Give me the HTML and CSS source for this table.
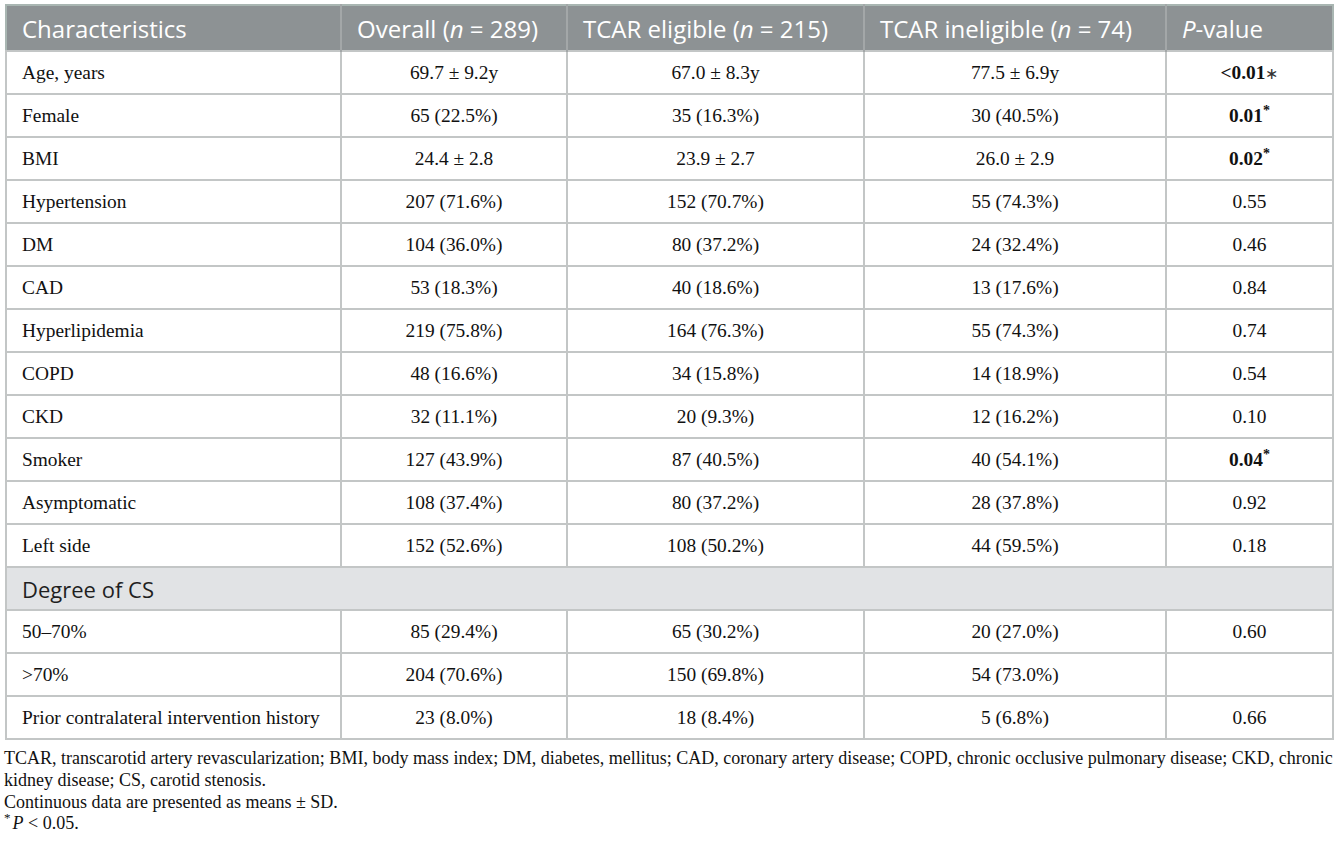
FILE: index.html
```html
<!DOCTYPE html>
<html lang="en">
<head>
    <meta charset="UTF-8">
    <title>Table 1 - TCAR eligibility</title>
    <link rel="stylesheet" href="styles.css">
</head>
<body>
    <div class="wrap">
        <table class="data-table">
            <colgroup>
                <col class="c-label">
                <col class="c-overall">
                <col class="c-elig">
                <col class="c-inelig">
                <col class="c-p">
            </colgroup>
            <thead>
                <tr>
                    <th>Characteristics</th>
                    <th>Overall (<i>n</i> = 289)</th>
                    <th>TCAR eligible (<i>n</i> = 215)</th>
                    <th>TCAR ineligible (<i>n</i> = 74)</th>
                    <th><i>P</i>-value</th>
                </tr>
            </thead>
            <tbody>
                <tr>
                    <td>Age, years</td>
                    <td>69.7 ± 9.2y</td>
                    <td>67.0 ± 8.3y</td>
                    <td>77.5 ± 6.9y</td>
                    <td><b>&lt;0.01</b><span class="ast">∗</span></td>
                </tr>
                <tr>
                    <td>Female</td>
                    <td>65 (22.5%)</td>
                    <td>35 (16.3%)</td>
                    <td>30 (40.5%)</td>
                    <td><b>0.01<sup>*</sup></b></td>
                </tr>
                <tr>
                    <td>BMI</td>
                    <td>24.4 ± 2.8</td>
                    <td>23.9 ± 2.7</td>
                    <td>26.0 ± 2.9</td>
                    <td><b>0.02<sup>*</sup></b></td>
                </tr>
                <tr>
                    <td>Hypertension</td>
                    <td>207 (71.6%)</td>
                    <td>152 (70.7%)</td>
                    <td>55 (74.3%)</td>
                    <td>0.55</td>
                </tr>
                <tr>
                    <td>DM</td>
                    <td>104 (36.0%)</td>
                    <td>80 (37.2%)</td>
                    <td>24 (32.4%)</td>
                    <td>0.46</td>
                </tr>
                <tr>
                    <td>CAD</td>
                    <td>53 (18.3%)</td>
                    <td>40 (18.6%)</td>
                    <td>13 (17.6%)</td>
                    <td>0.84</td>
                </tr>
                <tr>
                    <td>Hyperlipidemia</td>
                    <td>219 (75.8%)</td>
                    <td>164 (76.3%)</td>
                    <td>55 (74.3%)</td>
                    <td>0.74</td>
                </tr>
                <tr>
                    <td>COPD</td>
                    <td>48 (16.6%)</td>
                    <td>34 (15.8%)</td>
                    <td>14 (18.9%)</td>
                    <td>0.54</td>
                </tr>
                <tr>
                    <td>CKD</td>
                    <td>32 (11.1%)</td>
                    <td>20 (9.3%)</td>
                    <td>12 (16.2%)</td>
                    <td>0.10</td>
                </tr>
                <tr>
                    <td>Smoker</td>
                    <td>127 (43.9%)</td>
                    <td>87 (40.5%)</td>
                    <td>40 (54.1%)</td>
                    <td><b>0.04<sup>*</sup></b></td>
                </tr>
                <tr>
                    <td>Asymptomatic</td>
                    <td>108 (37.4%)</td>
                    <td>80 (37.2%)</td>
                    <td>28 (37.8%)</td>
                    <td>0.92</td>
                </tr>
                <tr>
                    <td>Left side</td>
                    <td>152 (52.6%)</td>
                    <td>108 (50.2%)</td>
                    <td>44 (59.5%)</td>
                    <td>0.18</td>
                </tr>
                <tr class="group-row">
                    <td colspan="5">Degree of CS</td>
                </tr>
                <tr>
                    <td>50–70%</td>
                    <td>85 (29.4%)</td>
                    <td>65 (30.2%)</td>
                    <td>20 (27.0%)</td>
                    <td>0.60</td>
                </tr>
                <tr>
                    <td>&gt;70%</td>
                    <td>204 (70.6%)</td>
                    <td>150 (69.8%)</td>
                    <td>54 (73.0%)</td>
                    <td></td>
                </tr>
                <tr>
                    <td>Prior contralateral intervention history</td>
                    <td>23 (8.0%)</td>
                    <td>18 (8.4%)</td>
                    <td>5 (6.8%)</td>
                    <td>0.66</td>
                </tr>
            </tbody>
        </table>

        <div class="notes">
            <p>TCAR, transcarotid artery revascularization; BMI, body mass index; DM, diabetes, mellitus; CAD, coronary artery disease; COPD, chronic occlusive pulmonary disease; CKD, chronic kidney disease; CS, carotid stenosis.</p>
            <p>Continuous data are presented as means ± SD.</p>
            <p><sup>*</sup><i>P</i> &lt; 0.05.</p>
        </div>
    </div>
</body>
</html>
```

FILE: styles.css
```css
body {
    margin: 0;
    background: #fff;
    color: #111;
    font-family: 'Liberation Serif', 'Times New Roman', serif;
}

.wrap {
    padding: 4px 0 0 4px;
}

.data-table {
    width: 1327px;
    margin-left: 1px;
    border-collapse: collapse;
    table-layout: fixed;
    border: 2px solid #a9b6b2;
    font-size: 19.4px;
}

.c-label { width: 335px; }
.c-overall { width: 226px; }
.c-elig { width: 297px; }
.c-inelig { width: 302px; }
.c-p { width: 167px; }

.data-table th {
    height: 44px;
    padding: 0 15px;
    background: #8d9294;
    color: #fff;
    font-family: 'Open Sans', 'Liberation Sans', sans-serif;
    font-size: 24px;
    font-weight: 400;
    text-align: left;
    white-space: nowrap;
    border-left: 2px solid #a3a7a8;
}

.data-table th:first-child {
    border-left: none;
}

.data-table td {
    height: 41px;
    padding: 0 15px;
    text-align: center;
    border: 2px solid #c3c6c6;
    white-space: nowrap;
}

.data-table td:first-child {
    text-align: left;
}

.data-table b {
    font-weight: 700;
}

.data-table sup {
    font-size: 14px;
    line-height: 0;
}

.ast {
    font-size: 16px;
    color: #333;
}

.group-row td {
    background: #e1e3e5;
    font-family: 'Open Sans', 'Liberation Sans', sans-serif;
    font-size: 22px;
    color: #1f1f1f;
}

.notes {
    margin-top: 8px;
    font-size: 18px;
    line-height: 21.8px;
}

.notes p {
    margin: 0;
}

.notes sup {
    font-size: 13px;
    line-height: 0;
    margin-right: 2px;
}
```
